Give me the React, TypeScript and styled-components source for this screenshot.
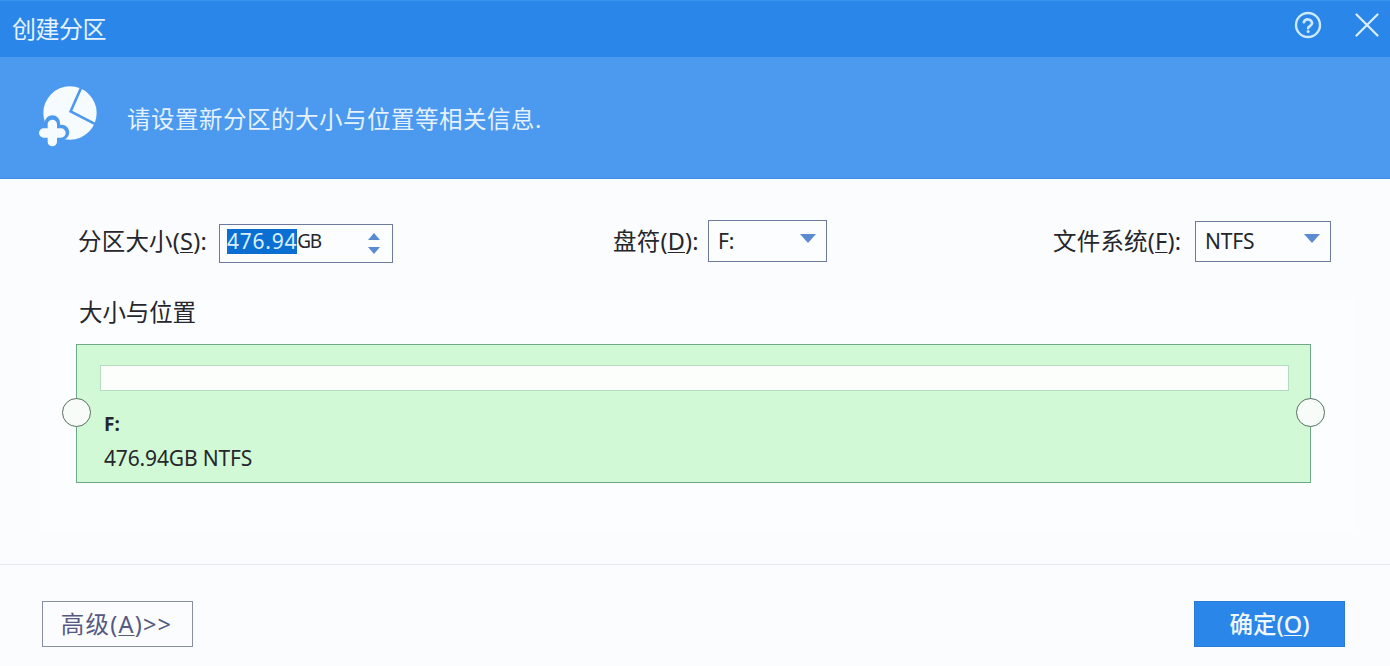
import React from "react";
import styled, { createGlobalStyle } from "styled-components";

const Global = createGlobalStyle`
  html, body { margin: 0; padding: 0; overflow: hidden; background: #fbfcfe; }
  * { box-sizing: border-box; }
`;

const Page = styled.div`
  width: 1390px;
  height: 666px;
  display: flex;
  flex-direction: column;
  background: #fbfcfe;
  color: #26272c;
  font-family: "Noto Sans", "Noto Sans CJK SC", sans-serif;
  overflow: hidden;
`;

const TitleBar = styled.header`
  height: 57px;
  flex: none;
  display: flex;
  align-items: center;
  padding: 0 11px 0 12px;
  background: #2a86e8;
  border-top: 1px solid #3a93ec;
`;

const Title = styled.h1`
  margin: 0;
  flex: 1;
  font-size: 24px;
  font-weight: 400;
  line-height: 56px;
  letter-spacing: -0.5px;
  color: #e6f3ff;
`;

const IconButton = styled.button<{ $gap: number }>`
  padding: 0;
  border: 0;
  background: none;
  display: flex;
  margin-left: ${(p) => p.$gap}px;
  margin-bottom: 8px;
`;

const Banner = styled.section`
  height: 122px;
  flex: none;
  display: flex;
  align-items: center;
  padding-left: 25px;
  background: #4c99f0;
  border-bottom: 1px solid #3d8dea;
`;

const BannerIcon = styled.svg`
  width: 90px;
  height: 80px;
  flex: none;
  margin-right: 12px;
  margin-top: 1px;
`;

const BannerText = styled.p`
  margin: 2px 0 0;
  font-size: 23.5px;
  line-height: 30px;
  letter-spacing: 0.5px;
  color: #e4f1fe;
`;

const Main = styled.main`
  height: 385px;
  flex: none;
  padding-top: 41px;
`;

const FormRow = styled.div`
  display: grid;
  grid-template-columns: 535px 440px 278px;
  grid-template-rows: 42px;
  height: 42px;
  margin-left: 78px;
`;

const FormGroup = styled.div`
  display: flex;
  align-items: center;
`;

const Label = styled.label<{ $width: number }>`
  width: ${(p) => p.$width}px;
  flex: none;
  font-size: 23.5px;
  line-height: 30px;
  white-space: nowrap;
  letter-spacing: 0.2px;
  u { text-underline-offset: 2px; text-decoration-thickness: 1px; }
`;

const Field = styled.div<{ $width: number; $height: number; $down?: number }>`
  width: ${(p) => p.$width}px;
  height: ${(p) => p.$height}px;
  margin-top: ${(p) => p.$down ?? 0}px;
  display: flex;
  align-items: center;
  padding: 0 10px 0 9px;
  background: #fcfdff;
  border: 1px solid #6d7a9c;
  font-size: 21px;
  letter-spacing: -0.2px;
`;

const FieldValue = styled.span`
  flex: 1;
  white-space: nowrap;
`;

const SpinValue = styled(FieldValue)`
  display: flex;
  align-items: center;
  height: 25px;
  margin-bottom: 5px;
`;

const Selected = styled.span`
  margin-left: -2px;
  height: 25px;
  line-height: 25px;
  background: #0b6fd2;
  color: #d9efff;
  letter-spacing: 0.75px;
`;

const Unit = styled.span`
  font-size: 19px;
  letter-spacing: -1.2px;
  line-height: 25px;
`;

const Spinner = styled.span`
  display: flex;
  flex-direction: column;
  gap: 7px;
  margin-right: 2px;
`;

const Triangle = styled.span<{ $dir: "up" | "down"; $w: number; $h: number }>`
  display: block;
  width: 0;
  height: 0;
  border-left: ${(p) => p.$w / 2}px solid transparent;
  border-right: ${(p) => p.$w / 2}px solid transparent;
  ${(p) => (p.$dir === "up" ? "border-bottom" : "border-top")}: ${(p) => p.$h}px solid #5c8ad0;
`;

const Arrow = styled(Triangle)`
  margin-bottom: 6px;
`;

const Section = styled.section`
  width: 1315px;
  height: 232px;
  margin: 36px 0 0 40px;
  background: #fcfdfe;
`;

const SectionTitle = styled.h2`
  margin: 0 0 18px 39px;
  height: 28px;
  font-size: 23.5px;
  font-weight: 400;
  line-height: 28px;
  letter-spacing: -0.1px;
`;

const Partition = styled.div`
  position: relative;
  width: 1235px;
  height: 139px;
  margin-left: 36px;
  padding: 20px 21px 0 23px;
  background: #d2f9d5;
  border: 1px solid #6fa888;
`;

const UsageBar = styled.div`
  height: 26px;
  background: #fcfefc;
  border: 1px solid #b5dcc0;
`;

const DriveName = styled.div`
  margin: 21px 0 0 4px;
  font-size: 19px;
  font-weight: 700;
  line-height: 24px;
`;

const DriveInfo = styled.div`
  margin: 10px 0 0 4px;
  font-size: 21px;
  line-height: 24px;
  letter-spacing: -0.15px;
`;

const Handle = styled.span<{ $side: "left" | "right" }>`
  position: absolute;
  top: 53px;
  ${(p) => p.$side}: -15px;
  width: 29px;
  height: 29px;
  border-radius: 50%;
  background: #f8fcf9;
  border: 1.5px solid #56705f;
`;

const Footer = styled.footer`
  flex: 1;
  display: flex;
  justify-content: space-between;
  padding: 36px 45px 0 42px;
  border-top: 1px solid #e6eaf1;
`;

const BaseButton = styled.button`
  width: 151px;
  height: 46px;
  padding: 0;
  font-family: inherit;
  font-size: 23.5px;
  line-height: 30px;
  u { text-underline-offset: 2px; text-decoration-thickness: 1px; }
`;

const GhostButton = styled(BaseButton)`
  background: #fbfcfe;
  color: #565a82;
  border: 1px solid #8a8ea3;
  letter-spacing: 1.2px;
  padding-right: 2px;
`;

const PrimaryButton = styled(BaseButton)`
  background: #2a86e8;
  color: #f0f8ff;
  border: 1px solid #2a7ad8;
  font-weight: 500;
`;

export default function App() {
  return (
    <Page>
      <Global />
      <TitleBar>
        <Title>创建分区</Title>
        <IconButton $gap={0} aria-label="help">
          <svg width="30" height="30" viewBox="0 0 30 30" fill="none" stroke="#cfe9ff" strokeLinecap="round">
            <circle cx="15" cy="15" r="12" strokeWidth="2.4" />
            <path d="M10.8 12.2a4.3 4.3 0 0 1 8.3 1c0 2.7-4 3-4 5" strokeWidth="2.6" />
            <path d="M15.1 21.6h.01" strokeWidth="3" />
          </svg>
        </IconButton>
        <IconButton $gap={32} aria-label="close">
          <svg width="24" height="24" viewBox="0 0 24 24" fill="none" stroke="#dcefff" strokeWidth="2.2" strokeLinecap="round">
            <path d="M1.5 1.5 22.5 22.5M22.5 1.5 1.5 22.5" />
          </svg>
        </IconButton>
      </TitleBar>

      <Banner>
        <BannerIcon viewBox="0 0 270 240">
          <circle cx="135" cy="105" r="80" fill="#f6fbff" />
          <path d="M168 30 137 100 218 142" fill="none" stroke="#4c99f0" strokeWidth="8" />
          <path d="M82 135V191M54 163H110" stroke="#4c99f0" strokeWidth="46" strokeLinecap="round" />
          <path d="M82 139V191M56 165H108" stroke="#f6fbff" strokeWidth="28" strokeLinecap="round" />
        </BannerIcon>
        <BannerText>请设置新分区的大小与位置等相关信息.</BannerText>
      </Banner>

      <Main>
        <FormRow>
          <FormGroup>
            <Label $width={141}>分区大小(<u>S</u>):</Label>
            <Field $width={174} $height={39} $down={5}>
              <SpinValue><Selected>476.94</Selected><Unit>GB</Unit></SpinValue>
              <Spinner>
                <Triangle $dir="up" $w={13} $h={7} />
                <Triangle $dir="down" $w={13} $h={7} />
              </Spinner>
            </Field>
          </FormGroup>
          <FormGroup>
            <Label $width={95}>盘符(<u>D</u>):</Label>
            <Field $width={119} $height={42}>
              <FieldValue>F:</FieldValue>
              <Arrow $dir="down" $w={16} $h={9} />
            </Field>
          </FormGroup>
          <FormGroup>
            <Label $width={142}>文件系统(<u>F</u>):</Label>
            <Field $width={136} $height={41}>
              <FieldValue>NTFS</FieldValue>
              <Arrow $dir="down" $w={16} $h={9} />
            </Field>
          </FormGroup>
        </FormRow>

        <Section>
          <SectionTitle>大小与位置</SectionTitle>
          <Partition>
            <UsageBar />
            <DriveName>F:</DriveName>
            <DriveInfo>476.94GB NTFS</DriveInfo>
            <Handle $side="left" />
            <Handle $side="right" />
          </Partition>
        </Section>
      </Main>

      <Footer>
        <GhostButton>高级(<u>A</u>)&gt;&gt;</GhostButton>
        <PrimaryButton>确定(<u>O</u>)</PrimaryButton>
      </Footer>
    </Page>
  );
}
